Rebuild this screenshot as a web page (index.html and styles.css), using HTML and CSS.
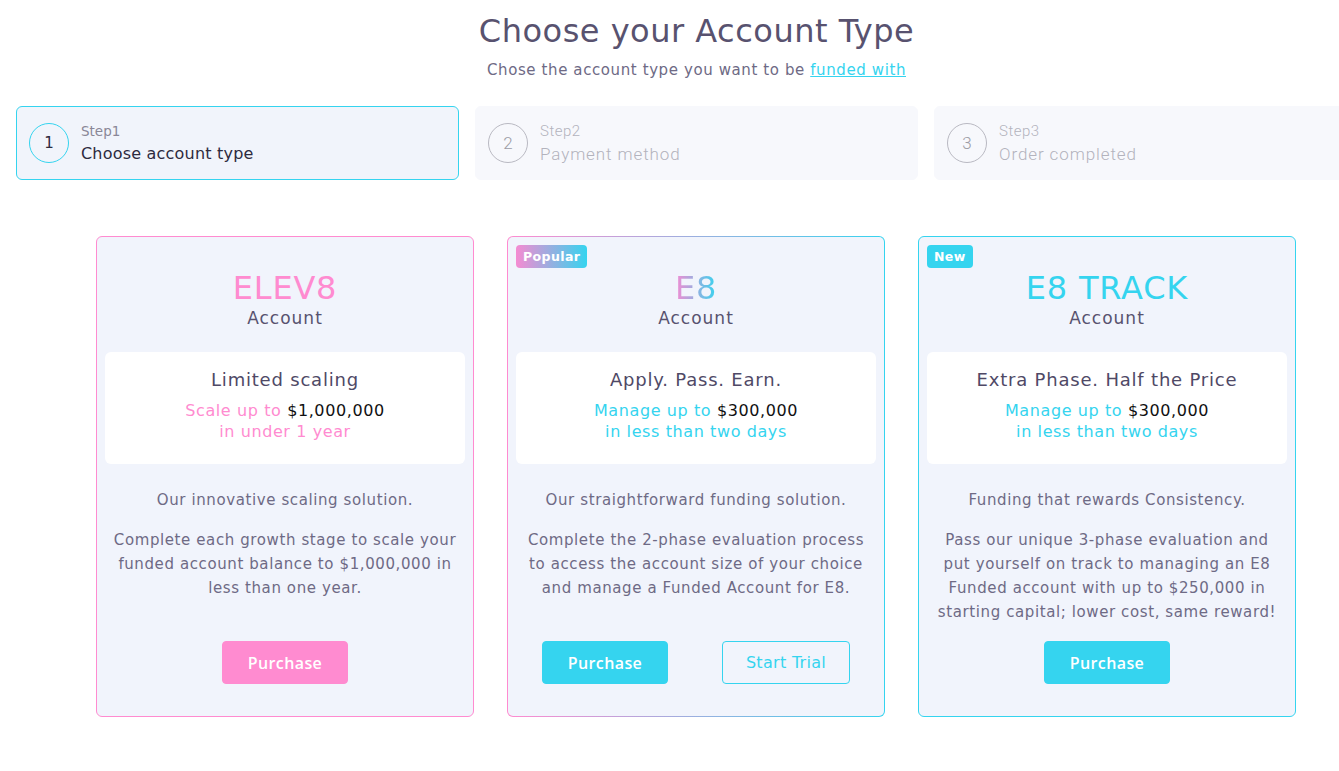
FILE: index.html
```html
<!DOCTYPE html>
<html lang="en">
<head>
    <meta charset="UTF-8">
    <meta name="viewport" content="width=device-width, initial-scale=1.0">
    <title>Choose your Account Type</title>
    <link rel="stylesheet" href="styles.css">
</head>
<body>
    <div class="page">
        <div class="intro">
            <h1>Choose your Account Type</h1>
            <p>Chose the account type you want to be <a href="#">funded with</a></p>
        </div>

        <div class="steps">
            <div class="step active">
                <div class="step-num">1</div>
                <div class="step-text">
                    <span class="step-label">Step1</span>
                    <span class="step-title">Choose account type</span>
                </div>
            </div>
            <div class="step">
                <div class="step-num">2</div>
                <div class="step-text">
                    <span class="step-label">Step2</span>
                    <span class="step-title">Payment method</span>
                </div>
            </div>
            <div class="step">
                <div class="step-num">3</div>
                <div class="step-text">
                    <span class="step-label">Step3</span>
                    <span class="step-title">Order completed</span>
                </div>
            </div>
        </div>

        <div class="plans">
            <div class="plan pink">
                <h2 class="plan-name">ELEV8</h2>
                <div class="plan-sub">Account</div>
                <div class="plan-box">
                    <h3>Limited scaling</h3>
                    <p>Scale up to <b>$1,000,000</b><br>in under 1 year</p>
                </div>
                <p class="plan-lead">Our innovative scaling solution.</p>
                <p class="plan-desc">Complete each growth stage to scale your<br>funded account balance to $1,000,000 in<br>less than one year.</p>
                <div class="plan-actions">
                    <button class="btn">Purchase</button>
                </div>
            </div>

            <div class="plan mixed">
                <span class="badge">Popular</span>
                <h2 class="plan-name"><span class="grad">E8</span></h2>
                <div class="plan-sub">Account</div>
                <div class="plan-box">
                    <h3>Apply. Pass. Earn.</h3>
                    <p>Manage up to <b>$300,000</b><br>in less than two days</p>
                </div>
                <p class="plan-lead">Our straightforward funding solution.</p>
                <p class="plan-desc">Complete the 2-phase evaluation process<br>to access the account size of your choice<br>and manage a Funded Account for E8.</p>
                <div class="plan-actions split">
                    <button class="btn">Purchase</button>
                    <button class="btn outline">Start Trial</button>
                </div>
            </div>

            <div class="plan cyan">
                <span class="badge">New</span>
                <h2 class="plan-name">E8 TRACK</h2>
                <div class="plan-sub">Account</div>
                <div class="plan-box">
                    <h3>Extra Phase. Half the Price</h3>
                    <p>Manage up to <b>$300,000</b><br>in less than two days</p>
                </div>
                <p class="plan-lead">Funding that rewards Consistency.</p>
                <p class="plan-desc">Pass our unique 3-phase evaluation and<br>put yourself on track to managing an E8<br>Funded account with up to $250,000 in<br>starting capital; lower cost, same reward!</p>
                <div class="plan-actions">
                    <button class="btn">Purchase</button>
                </div>
            </div>
        </div>
    </div>
</body>
</html>
```

FILE: styles.css
```css
body {
    margin: 0;
    background: #fff;
    font-family: "DejaVu Sans", "Open Sans", sans-serif;
    color: #58526f;
    overflow: hidden;
}
.page {
    width: 1361px;
    margin-left: 16px;
}
.intro {
    text-align: center;
    padding-top: 10px;
}
.intro h1 {
    margin: 0;
    font-size: 32px;
    font-weight: 400;
    line-height: 42px;
    letter-spacing: 0.5px;
    color: #58526f;
}
.intro p {
    margin: 6px 0 0;
    font-size: 15px;
    line-height: 24px;
    letter-spacing: 0.6px;
    color: #6e6a85;
}
.intro a {
    color: #35d4ef;
}

.steps {
    display: flex;
    gap: 16px;
    margin-top: 24px;
}
.step {
    flex: 1;
    display: flex;
    align-items: center;
    gap: 12px;
    height: 72px;
    padding: 0 12px;
    background: #f7f8fc;
    border: 1px solid #f7f8fc;
    border-radius: 6px;
}
.step.active {
    background: #f1f4fb;
    border-color: #35d4ef;
}
.step-num {
    width: 38px;
    height: 38px;
    border: 1px solid #b9b9c2;
    border-radius: 50%;
    display: flex;
    align-items: center;
    justify-content: center;
    font-family: "Roboto", sans-serif;
    font-weight: 300;
    font-size: 17px;
    color: #9c9ca6;
}
.step-text {
    display: flex;
    flex-direction: column;
    gap: 4px;
    font-family: "Roboto", sans-serif;
    font-weight: 300;
    color: #b3b3bd;
}
.step-label {
    font-size: 15px;
    line-height: 18px;
    letter-spacing: 0.5px;
}
.step-title {
    font-size: 17px;
    line-height: 20px;
    letter-spacing: 0.9px;
}
.active .step-num {
    border-color: #35d4ef;
    color: #2d2a3e;
    font-family: "DejaVu Sans", sans-serif;
    font-weight: 400;
    font-size: 15px;
}
.active .step-text {
    font-family: "DejaVu Sans", sans-serif;
    font-weight: 400;
}
.active .step-label {
    font-size: 13.5px;
    letter-spacing: 0;
    color: #8a8797;
}
.active .step-title {
    font-size: 16px;
    letter-spacing: 0.2px;
    color: #2d2a3e;
}

.plans {
    display: flex;
    gap: 33px;
    padding: 0 80px;
    margin-top: 56px;
}
.plan {
    position: relative;
    flex: 0 0 378px;
    box-sizing: border-box;
    height: 481px;
    display: flex;
    flex-direction: column;
    padding: 32px 8px 32px;
    background: #f1f4fc;
    border: 1px solid #ff8bd0;
    border-radius: 6px;
    text-align: center;
}
.plan.cyan {
    border-color: #35d4ef;
}
.plan.mixed {
    border-color: transparent;
    background: linear-gradient(#f1f4fc, #f1f4fc) padding-box,
                linear-gradient(to right, #ff8bd0, #35d4ef) border-box;
}
.plan-name {
    margin: 0;
    font-size: 32px;
    font-weight: 400;
    line-height: 38px;
    letter-spacing: 0.8px;
    color: #ff8bd0;
}
.cyan .plan-name {
    color: #35d4ef;
}
.grad {
    background: linear-gradient(to right, #f58bd2, #35d4ef);
    -webkit-background-clip: text;
    background-clip: text;
    color: transparent;
}
.plan-sub {
    font-size: 17px;
    line-height: 22px;
    letter-spacing: 1px;
    color: #58526f;
}
.plan-box {
    height: 112px;
    box-sizing: border-box;
    margin-top: 23px;
    padding-top: 16px;
    background: #fff;
    border-radius: 6px;
}
.plan-box h3 {
    margin: 0;
    font-size: 18px;
    font-weight: 400;
    line-height: 24px;
    letter-spacing: 0.8px;
    color: #4f4966;
}
.plan-box p {
    margin: 8px 0 0;
    font-size: 16px;
    line-height: 21px;
    letter-spacing: 0.6px;
    color: #ff8bd0;
}
.mixed .plan-box p,
.cyan .plan-box p {
    color: #35d4ef;
}
.plan-box b {
    font-weight: 400;
    color: #111;
}
.plan-lead,
.plan-desc {
    margin: 0;
    font-size: 15px;
    line-height: 24px;
    letter-spacing: 0.6px;
    color: #6e6a85;
}
.plan-lead {
    margin-top: 24px;
}
.plan-desc {
    margin-top: 16px;
}
.plan-actions {
    margin-top: auto;
    display: flex;
    justify-content: center;
}
.plan-actions.split {
    justify-content: space-between;
    padding: 0 26px 0 26px;
}
.btn {
    width: 126px;
    height: 43px;
    border: 1px solid #35d4ef;
    border-radius: 4px;
    background: #35d4ef;
    color: #fff;
    font-family: "Open Sans", sans-serif;
    font-size: 16px;
    font-weight: 600;
    letter-spacing: 0.4px;
    cursor: pointer;
}
.pink .btn {
    background: #ff8bd0;
    border-color: #ff8bd0;
}
.btn.outline {
    width: 128px;
    background: transparent;
    color: #35d4ef;
    font-family: "DejaVu Sans", sans-serif;
    font-weight: 400;
    letter-spacing: 0.3px;
}
.badge {
    position: absolute;
    top: 8px;
    left: 8px;
    padding: 0 7px;
    height: 23px;
    line-height: 23px;
    border-radius: 4px;
    background: #35d4ef;
    color: #fff;
    font-size: 12.5px;
    font-weight: 700;
    letter-spacing: 0.4px;
}
.mixed .badge {
    background: linear-gradient(to right, #f58bd2, #35d4ef);
}
```
